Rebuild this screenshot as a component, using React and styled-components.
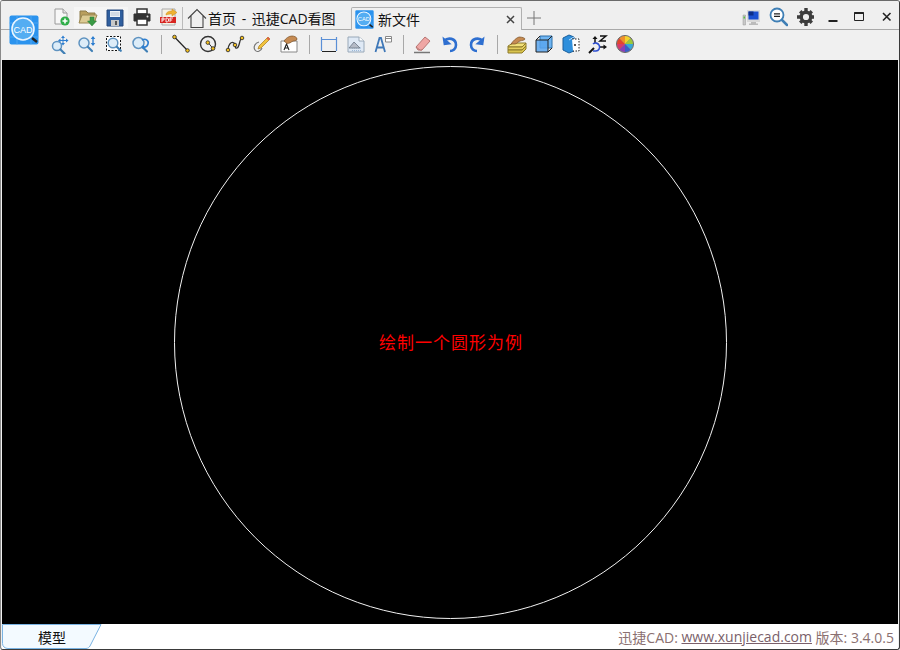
import styled, { createGlobalStyle } from "styled-components";

const GlobalStyle = createGlobalStyle`
  html, body {
    margin: 0;
    padding: 0;
    background: #fff;
  }
  * {
    box-sizing: border-box;
  }
`;

const FONT = `"Open Sans", "Noto Sans CJK SC", sans-serif`;

const Window = styled.div`
  position: relative;
  width: 900px;
  height: 650px;
  display: flex;
  flex-direction: column;
  background: #f0f0f0;
  border: 1px solid #3a3a3a;
  border-top-color: #6a6a6a;
  border-left-color: #8a8a8a;
  border-radius: 3px;
  overflow: hidden;
  font-family: ${FONT};
`;

const TitleBar = styled.div`
  height: 29px;
  flex: none;
  display: flex;
  align-items: flex-end;
  padding-left: 46px;
  background: #efefef;
  border-bottom: 1px solid #a9a9a9;
`;

const Toolbar = styled.div`
  height: 30px;
  flex: none;
  display: flex;
  align-items: center;
  padding: 0 0 2px 45px;
  background: #f0f0f0;
`;

const Logo = styled.div`
  position: absolute;
  left: 8px;
  top: 14px;
  width: 30px;
  height: 30px;
`;

const IconCell = styled.div`
  width: 27px;
  height: ${(p) => (p.$hot ? "21px" : "24px")};
  flex: none;
  display: flex;
  align-items: center;
  justify-content: center;
  margin-bottom: ${(p) => (p.$hot ? "1px" : "0")};
  background: ${(p) => (p.$hot ? "#f5f5f5" : "transparent")};
`;

const Sep = styled.div`
  width: 1px;
  height: 19px;
  background: #a8a8a8;
  flex: none;
  margin: 0 5px 0 7px;
`;

const TabDivider = styled.div`
  width: 1px;
  height: 22px;
  background: #bbb;
  flex: none;
`;

const Tab = styled.div`
  height: ${(p) => (p.$active ? "23px" : "22px")};
  width: ${(p) => p.$w}px;
  margin-left: ${(p) => p.$ml}px;
  flex: none;
  display: flex;
  align-items: center;
  gap: ${(p) => (p.$active ? "4px" : "1px")};
  font-size: 14px;
  word-spacing: 2px;
  color: #111;
  white-space: nowrap;
  padding-left: ${(p) => (p.$active ? "3px" : "4px")};
  margin-bottom: ${(p) => (p.$active ? "-1px" : "0")};
  background: ${(p) => (p.$active ? "#f0f0f0" : "transparent")};
  border: ${(p) => (p.$active ? "1px solid #b0b0b0" : "none")};
  border-bottom: none;
  border-radius: 2px 2px 0 0;
`;

const TabClose = styled.span`
  margin-left: auto;
  margin-right: 5px;
  display: flex;
`;

const Plus = styled.div`
  margin: 0 0 4px 5px;
  display: flex;
`;

const Spacer = styled.div`
  flex: 1;
`;

const WinButtons = styled.div`
  display: flex;
`;

const Canvas = styled.div`
  flex: 1;
  margin: 0 1px;
  background: #000;
  display: flex;
  align-items: center;
  justify-content: center;
`;

const Circle = styled.div`
  width: 553px;
  height: 553px;
  border: 1px solid #f2f2f2;
  border-radius: 50%;
  display: flex;
  align-items: center;
  justify-content: center;
`;

const Note = styled.span`
  color: #ff0000;
  font-family: "Noto Sans CJK SC", sans-serif;
  font-size: 17px;
  letter-spacing: 1px;
  font-weight: 400;
  line-height: 1;
  padding: 0 0 2px 2px;
`;

const StatusBar = styled.div`
  height: 25px;
  flex: none;
  display: flex;
  align-items: stretch;
  justify-content: space-between;
  margin: 0 1px;
  background: #fff;
`;

const SheetTab = styled.div`
  position: relative;
  width: 100px;
  font-size: 14px;
  color: #111;
  display: flex;
  align-items: center;
  justify-content: center;
`;

const SheetShape = styled.svg`
  position: absolute;
  left: 0;
  top: 0;
`;

const SheetLabel = styled.span`
  position: relative;
`;

const Version = styled.div`
  font-size: 14px;
  color: #8b7070;
  display: flex;
  align-items: center;
  padding-right: 4px;
  white-space: pre;
`;

const VersionLink = styled.a`
  color: #7a5f6a;
  text-decoration: underline;
`;

const Ic = ({ children, s = 20 }) => (
  <svg width={s} height={s} viewBox="0 0 20 20" fill="none">
    {children}
  </svg>
);

const Lens = ({ cx = 8, cy = 11, r = 5 }) => (
  <>
    <circle cx={cx} cy={cy} r={r} fill="#dcecf8" stroke="#5f93c0" strokeWidth="1.5" />
    <path d={`M${cx + r - 1} ${cy + r - 1}l4 4`} stroke="#3f7fb5" strokeWidth="2.2" strokeLinecap="round" />
  </>
);

const Dot = ({ x, y, r = 1.8 }) => (
  <circle cx={x} cy={y} r={r} fill="#f4c020" stroke="#222" strokeWidth=".8" />
);

const icons = {
  newFile: (
    <Ic>
      <path d="M4 2h8l4 4v11H4z" fill="#f7f7f7" stroke="#9a9a9a" />
      <path d="M12 2v4h4" fill="#e4e4e4" stroke="#9a9a9a" />
      <circle cx="14" cy="14" r="4.6" fill="#2fae49" />
      <path d="M14 11.5v5M11.5 14h5" stroke="#fff" strokeWidth="1.6" />
    </Ic>
  ),
  open: (
    <Ic>
      <path d="M2 3h6l2 2h7v9H2z" fill="#b99f5e" stroke="#8c7a48" />
      <path d="M1 15l3-8h15l-3 8z" fill="#dccb94" stroke="#9a8750" />
      <path d="M12 9h4v4h2.500l-4.500 5-4.500-5H12z" fill="#3a9a46" stroke="#2a7a36" strokeWidth=".5" />
    </Ic>
  ),
  save: (
    <Ic>
      <path d="M2 2h16v16H2z" fill="#2f5f9f" stroke="#27497c" />
      <path d="M5 3h10v6H5z" fill="#eef3f8" />
      <path d="M5.500 5h9M5.500 7h9" stroke="#b4c2d2" />
      <path d="M6 12h8v6H6z" fill="#c8c8c8" />
      <path d="M10 13h2v4h-2z" fill="#555" />
    </Ic>
  ),
  print: (
    <Ic>
      <path d="M5 2h10v5H5z" fill="#fff" stroke="#333" strokeWidth="1.5" />
      <path d="M2 7h16v7H2z" fill="#333" stroke="#333" />
      <path d="M5 12h10v6H5z" fill="#fff" stroke="#333" strokeWidth="1.5" />
      <circle cx="15.500" cy="9.500" r="1" fill="#ddd" />
    </Ic>
  ),
  pdf: (
    <Ic>
      <path d="M3 2h13v16H3z" fill="#f6f1e4" stroke="#aaa" />
      <path d="M1 10h16v6H1z" fill="#d8241f" />
      <path d="M3 15v-4h2v2H3M7 11v4h1.500l1-1v-2l-1-1zM11 15v-4h3M11 13h2.200" stroke="#fff" strokeWidth=".9" />
      <path d="M7 8c0-3 3-4 6-4V2l5 3.500-5 3.500V7c-2 0-4 0-6 1z" fill="#eeb233" stroke="#c98b1a" strokeWidth=".5" />
    </Ic>
  ),
  pan: (
    <Ic>
      <Lens cx={7} cy={12} r={4.5} />
      <path d="M13 1.500l2 2.500h-4zM13 11.500l2-2.500h-4zM8 6.500l2.500-2v4zM18.500 6.500l-2.500-2v4z" fill="#2f7fd0" />
      <path d="M13 3v7M9 6.500h9" stroke="#2f7fd0" />
    </Ic>
  ),
  zoomUd: (
    <Ic>
      <Lens cx={7} cy={9} r={5} />
      <path d="M16 2l2.300 3h-4.600zM16 12l2.300-3h-4.600z" fill="#2f7fd0" />
      <path d="M16 4v6" stroke="#2f7fd0" strokeWidth="1.400" />
    </Ic>
  ),
  zoomWin: (
    <Ic>
      <path d="M2.500 2.500h14v14h-14z" fill="#fff" stroke="#111" strokeDasharray="2 1.500" />
      <Lens cx={9} cy={9} r={4.800} />
    </Ic>
  ),
  zoomBack: (
    <Ic>
      <Lens cx={7.500} cy={9} r={5.500} />
      <path d="M11 6c4-2 7 1 6 4s-3 3.500-5 3" stroke="#2f7fd0" strokeWidth="1.600" />
      <path d="M13 10.500L10 13l3 2.500z" fill="#2f7fd0" />
    </Ic>
  ),
  line: (
    <Ic>
      <path d="M3.500 3l13 13.500" stroke="#222" strokeWidth="1.200" />
      <Dot x={3.500} y={3} />
      <Dot x={16.500} y={16.500} />
    </Ic>
  ),
  circle: (
    <Ic>
      <circle cx="10" cy="10" r="7.500" stroke="#333" strokeWidth="1.400" />
      <path d="M10 8.500l5 6" stroke="#333" />
      <Dot x={9.800} y={8.600} />
      <Dot x={15} y={14.500} />
    </Ic>
  ),
  curve: (
    <Ic>
      <path d="M3 16c0-5 3-9 6-7s0 6 3 5 2-9 5-10" stroke="#333" strokeWidth="1.300" />
      <Dot x={3} y={16} />
      <Dot x={10} y={11} />
      <Dot x={17} y={4} />
    </Ic>
  ),
  pencil: (
    <Ic>
      <path d="M7 8c-4 1-6 5-4 8s6 1 7-2" stroke="#777" strokeWidth="1.200" />
      <path d="M16 3l2 2-9 9-3 1 1-3z" fill="#f1c23c" stroke="#a57a1a" strokeWidth=".7" />
      <path d="M16 3l2 2-1.500 1.500-2-2z" fill="#e0604c" />
    </Ic>
  ),
  textHand: (
    <Ic>
      <path d="M2 7h16v11H2z" fill="#fff" stroke="#888" />
      <path d="M5 16l2.500-6 2.500 6M6 14h3" stroke="#222" strokeWidth="1.100" />
      <path d="M5 7c2-3 5-5 8-5 2 0 5 1 5 3s-3 1.500-5 2.500c-1 1-3 2-5 2z" fill="#c58a52" stroke="#7d5328" strokeWidth=".7" />
    </Ic>
  ),
  dim: (
    <Ic>
      <path d="M2.500 3v14M17.500 3v14" stroke="#5a8fd6" strokeWidth="1.200" />
      <path d="M3 5.500h14" stroke="#5a8fd6" strokeWidth="1.200" />
      <path d="M3 17.500h14" stroke="#222" strokeWidth="1.200" />
    </Ic>
  ),
  hatch: (
    <Ic>
      <path d="M2 3h11l5 4v11H2z" fill="#dfe9f5" stroke="#98a8b8" />
      <path d="M6 14h10M6 16.500h10" stroke="#9db9d8" strokeDasharray="1 1" />
      <path d="M3 14l5-6 6 6z" fill="#b4bac6" stroke="#6b7686" strokeWidth=".8" />
      <path d="M13 3v4h5" fill="#fff" stroke="#98a8b8" />
    </Ic>
  ),
  textA: (
    <Ic>
      <path d="M2.500 18l4-14h1.500l4 14M4.500 13.500h5.500" stroke="#3f78b8" strokeWidth="1.800" />
      <path d="M12.500 2.500h6v5.500h-6z" fill="#fff" stroke="#888" />
      <path d="M12.500 4.500h6" stroke="#888" />
    </Ic>
  ),
  eraser: (
    <Ic>
      <path d="M3 13L12 3l5 4-8 9H5z" fill="#efa6a4" stroke="#b77572" />
      <path d="M3 13l4 3 2 0" fill="#e8c0bc" stroke="#b77572" />
      <path d="M1 18.500h16" stroke="#777" strokeWidth="1.500" />
    </Ic>
  ),
  undo: (
    <Ic>
      <path d="M4 7c4-4 12-3 12 4 0 4-3 6-6 6" stroke="#2e6fd0" strokeWidth="2.600" />
      <path d="M3 2v9h8z" fill="#2e6fd0" transform="rotate(-8 6 6)" />
    </Ic>
  ),
  redo: (
    <Ic>
      <path d="M16 7c-4-4-12-3-12 4 0 4 3 6 6 6" stroke="#2e6fd0" strokeWidth="2.600" />
      <path d="M17 2v9H9z" fill="#2e6fd0" transform="rotate(8 14 6)" />
    </Ic>
  ),
  layerHand: (
    <Ic>
      <path d="M1 12l5-3h13l-4 4H1z" fill="#f1e07a" stroke="#8d7a2a" />
      <path d="M1 13h14l4-4v3l-4 4H1z" fill="#e4cf5e" stroke="#8d7a2a" />
      <path d="M1 16h14l4-4v3l-4 4H1z" fill="#d9c44e" stroke="#8d7a2a" />
      <path d="M4 10c2-3 5-6 8-7 3 0 6 1 6 2s-3 1.500-5 2-3 3-5 3z" fill="#c58a52" stroke="#7d5328" strokeWidth=".7" />
    </Ic>
  ),
  cube: (
    <Ic>
      <path d="M6 2h12v12H6z" fill="#6fb5f2" stroke="#2d6ea8" />
      <path d="M2 6h12v12H2z" fill="#5aa6ee" fillOpacity=".85" stroke="#222" />
      <path d="M2 6l4-4M14 6l4-4M14 18l4-4" stroke="#222" />
    </Ic>
  ),
  cubeDash: (
    <Ic>
      <path d="M2 4l6-3 5 2v14l-5 2-6-3z" fill="#2e8fdc" stroke="#1a5f9c" />
      <path d="M8 6l5-3" stroke="#bfe0fa" />
      <path d="M11 5h7v12h-6" fill="#fff" stroke="#222" strokeDasharray="1.500 1.500" />
      <circle cx="14" cy="11" r="1" fill="#222" />
    </Ic>
  ),
  axes: (
    <Ic>
      <path d="M7 2l2.500 3h-5z" fill="#111" />
      <path d="M7 4v5" stroke="#111" strokeWidth="1.500" />
      <path d="M12 2h6l-6 5h6" stroke="#111" strokeWidth="1.500" />
      <path d="M11 13h5" stroke="#111" strokeWidth="1.500" />
      <path d="M15.500 10.500l3.500 2.500-3.500 2.500z" fill="#111" />
      <path d="M5 10a4 4 0 1 1 3 7h-3" stroke="#2e4fd0" strokeWidth="1.600" />
      <path d="M1 19l5-5" stroke="#111" strokeWidth="2" />
    </Ic>
  ),
  color: (
    <Ic>
      <circle cx="10" cy="10" r="8.500" fill="#888" stroke="#666" />
      <path d="M10 10V2a8 8 0 0 1 5.500 2.200z" fill="#f2d22e" />
      <path d="M10 10l5.500-5.800A8 8 0 0 1 18 10z" fill="#9cc93a" />
      <path d="M10 10h8a8 8 0 0 1-2.400 5.700z" fill="#37a8d8" />
      <path d="M10 10l5.600 5.700A8 8 0 0 1 10 18z" fill="#3a5fc8" />
      <path d="M10 10v8a8 8 0 0 1-5.700-2.400z" fill="#8a3fb5" />
      <path d="M10 10l-5.700 5.600A8 8 0 0 1 2 10z" fill="#d83a6a" />
      <path d="M10 10H2a8 8 0 0 1 2.400-5.700z" fill="#e2452e" />
      <path d="M10 10L4.400 4.300A8 8 0 0 1 10 2z" fill="#ef8f2a" />
    </Ic>
  ),
  monitor: (
    <Ic>
      <path d="M6 3h13v12H6z" fill="#d9d9d9" />
      <path d="M7.500 4.500h10v8h-10z" fill="#1a4fd0" />
      <path d="M7.500 4.500h5v4h-5z" fill="#0c2d86" />
      <path d="M10 15h5v1.500h2V18H8v-1.500h2z" fill="#bbb" />
      <path d="M2 8h2.500v10H2z" fill="#c8c8c8" stroke="#999" strokeWidth=".5" />
      <path d="M2.500 9.500H4v2H2.500z" fill="#58c040" />
    </Ic>
  ),
  zoomEq: (
    <Ic>
      <g transform="translate(1 0)">
        <circle cx="8" cy="8" r="6.500" fill="#fff" stroke="#3f7fb5" strokeWidth="1.800" />
        <path d="M5 6.800h6M5 9.300h6" stroke="#222" strokeWidth="1.300" />
        <path d="M13 13l5 5" stroke="#3f7fb5" strokeWidth="2.500" strokeLinecap="round" />
      </g>
    </Ic>
  ),
  gear: (
    <svg width="18" height="18" viewBox="-1 0 18 18" fill="none">
      <circle cx="9" cy="9" r="4.800" stroke="#3d3d3d" strokeWidth="3.400" />
      <path
        d="M7.300 0h3.400v3.500H7.300zM7.300 14.500h3.400V18H7.300zM0 7.300h3.500v3.400H0zM14.500 7.300H18v3.400h-3.500zM2 4.400L4.400 2l2.400 2.400-2.400 2.400zM11.200 13.600l2.400-2.400 2.400 2.400-2.400 2.400zM13.600 2L16 4.400l-2.400 2.400-2.400-2.400zM4.400 11.200l2.400 2.400L4.400 16 2 13.600z"
        fill="#3d3d3d"
      />
    </svg>
  ),
  min: (
    <svg width="18" height="18" viewBox="0 0 18 18">
      <path d="M5.500 13h9" stroke="#222" strokeWidth="2" />
    </svg>
  ),
  max: (
    <svg width="18" height="18" viewBox="0 0 18 18" fill="none">
      <path d="M4.500 4.500h9v8h-9z" stroke="#222" />
      <path d="M4.500 5h9" stroke="#222" strokeWidth="2" />
    </svg>
  ),
  close: (
    <svg width="18" height="18" viewBox="0 0 18 18" fill="none">
      <path d="M6 5l7.500 7.500M13.500 5L6 12.500" stroke="#222" strokeWidth="1.600" />
    </svg>
  ),
};

const CadBadge = ({ size = 30 }) => (
  <svg width={size} height={size} viewBox="0 0 30 30">
    <rect x="0.500" y="0.500" width="29" height="29" rx="2" fill="#2b93ee" />
    <path d="M0 8h30M0 22h30M8 0v30M22 0v30" stroke="#66b4f4" strokeWidth=".6" />
    <circle cx="14" cy="14" r="11" fill="#54adf2" stroke="#eaf5ff" strokeWidth="1.600" />
    <text x="14" y="17.500" textAnchor="middle" fontSize="9" fill="#fff" fontFamily="Liberation Sans, sans-serif">
      CAD
    </text>
    <path d="M23 23l5 4" stroke="#222" strokeWidth="2.400" />
  </svg>
);

const quickTools = ["newFile", "open", "save", "print", "pdf"];
const hotTools = ["open", "save"];
const toolGroups = [
  ["pan", "zoomUd", "zoomWin", "zoomBack"],
  ["line", "circle", "curve", "pencil", "textHand"],
  ["dim", "hatch", "textA"],
  ["eraser", "undo", "redo"],
  ["layerHand", "cube", "cubeDash", "axes", "color"],
];
const windowTools = ["monitor", "zoomEq", "gear", "min", "max", "close"];

const HomeIcon = () => (
  <svg width="20" height="21" viewBox="0 0 20 21" fill="none">
    <path d="M1 10.500L10 1.500l9 9M4 8v11.500h12V8" stroke="#444" strokeWidth="1.100" />
  </svg>
);

const Group = ({ items, last }) => (
  <>
    {items.map((name) => (
      <IconCell key={name}>{icons[name]}</IconCell>
    ))}
    {!last && <Sep />}
  </>
);

const App = () => {
  return (
    <>
      <GlobalStyle />
      <Window>
        <TitleBar>
          {quickTools.map((name) => (
            <IconCell key={name} $hot={hotTools.includes(name)}>
              {icons[name]}
            </IconCell>
          ))}
          <TabDivider />
          <Tab $w={162} $ml={0}>
            <HomeIcon />
            首页 - 迅捷CAD看图
          </Tab>
          <Tab $active $w={171} $ml={6}>
            <CadBadge size={19} />
            新文件
            <TabClose>
              <svg width="11" height="11" viewBox="0 0 11 11" fill="none">
                <path d="M2 2l7 7M9 2l-7 7" stroke="#444" strokeWidth="1.500" />
              </svg>
            </TabClose>
          </Tab>
          <Plus>
            <svg width="14" height="14" viewBox="0 0 14 14" fill="none">
              <path d="M7 0v14M0 7h14" stroke="#777" />
            </svg>
          </Plus>
          <Spacer />
          <WinButtons>
            {windowTools.map((name) => (
              <IconCell key={name}>{icons[name]}</IconCell>
            ))}
          </WinButtons>
        </TitleBar>
        <Toolbar>
          {toolGroups.map((group, i) => (
            <Group key={group[0]} items={group} last={i === toolGroups.length - 1} />
          ))}
        </Toolbar>
        <Canvas>
          <Circle>
            <Note>绘制一个圆形为例</Note>
          </Circle>
        </Canvas>
        <StatusBar>
          <SheetTab>
            <SheetShape width="100" height="25" viewBox="0 0 100 25" fill="none">
              <path d="M0.500 0.500H99L88 22c-1 1.500-2 2.500-4 2.500H6c-3 0-5.500-2-5.500-5z" fill="#f3faff" stroke="#79b3e3" />
            </SheetShape>
            <SheetLabel>模型</SheetLabel>
          </SheetTab>
          <Version>
            迅捷CAD: <VersionLink>www.xunjiecad.com</VersionLink> 版本: 3.4.0.5
          </Version>
        </StatusBar>
        <Logo>
          <CadBadge />
        </Logo>
      </Window>
    </>
  );
};

export default App;
